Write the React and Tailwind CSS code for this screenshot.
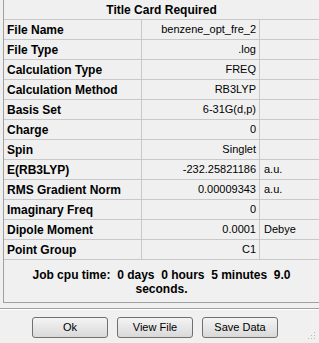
const rows = [
  ['File Name', 'benzene_opt_fre_2', ''],
  ['File Type', '.log', ''],
  ['Calculation Type', 'FREQ', ''],
  ['Calculation Method', 'RB3LYP', ''],
  ['Basis Set', '6-31G(d,p)', ''],
  ['Charge', '0', ''],
  ['Spin', 'Singlet', ''],
  ['E(RB3LYP)', '-232.25821186', 'a.u.'],
  ['RMS Gradient Norm', '0.00009343', 'a.u.'],
  ['Imaginary Freq', '0', ''],
  ['Dipole Moment', '0.0001', 'Debye'],
  ['Point Group', 'C1', ''],
];

const App = () => {
  return (
    <div className="w-[319px] h-[343px] bg-[#f0f0f0] text-black font-['Liberation_Sans',Arial,sans-serif] overflow-hidden relative">
      {/* Panel */}
      <div className="ml-[3px] h-[303px] border-l border-b border-[#a0a0a0] flex flex-col">
        <div className="h-[19px] flex items-center justify-center text-[12px] font-bold">
          Title Card Required
        </div>
        {rows.map(([label, value, unit]) => (
          <div key={label} className="h-[20px] border-t border-[#c8c8c8] grid grid-cols-[138px_118px_1fr]">
            <div className="border-r border-[#c8c8c8] pl-[3px] flex items-center text-[12px] font-bold whitespace-nowrap">
              {label}
            </div>
            <div className="border-r border-[#c8c8c8] pr-[3px] flex items-center justify-end text-[11px] whitespace-nowrap">
              {value}
            </div>
            <div className="pl-[4px] flex items-center text-[11px] whitespace-nowrap">{unit}</div>
          </div>
        ))}
        <div className="flex-1 border-t border-[#c8c8c8] pt-[8px] text-center text-[12px] font-bold leading-[14px] whitespace-pre">
          {'Job cpu time:  0 days  0 hours  5 minutes  9.0\nseconds.'}
        </div>
      </div>

      {/* Separator */}
      <div className="mt-[5px] border-t border-[#a0a0a0] border-b border-b-white"></div>

      {/* Buttons */}
      <div className="mt-[7px] pl-[32px] flex gap-[9px]">
        {['Ok', 'View File', 'Save Data'].map(b => (
          <button
            key={b}
            className="w-[76px] h-[21px] rounded-[3px] border border-[#707070] bg-gradient-to-b from-[#f4f4f4] to-[#d9d9d9] text-[11px] flex items-center justify-center"
          >
            {b}
          </button>
        ))}
      </div>

      {/* Size grip */}
      <svg className="absolute right-[3px] bottom-[3px]" width="8" height="8" viewBox="0 0 8 8">
        <rect x="6" y="0" width="1" height="1" fill="#b8b8b8" />
        <rect x="3" y="3" width="1" height="1" fill="#b8b8b8" />
        <rect x="6" y="3" width="1" height="1" fill="#b8b8b8" />
        <rect x="0" y="6" width="1" height="1" fill="#b8b8b8" />
        <rect x="3" y="6" width="1" height="1" fill="#b8b8b8" />
        <rect x="6" y="6" width="1" height="1" fill="#b8b8b8" />
      </svg>
    </div>
  );
};

export default App;
